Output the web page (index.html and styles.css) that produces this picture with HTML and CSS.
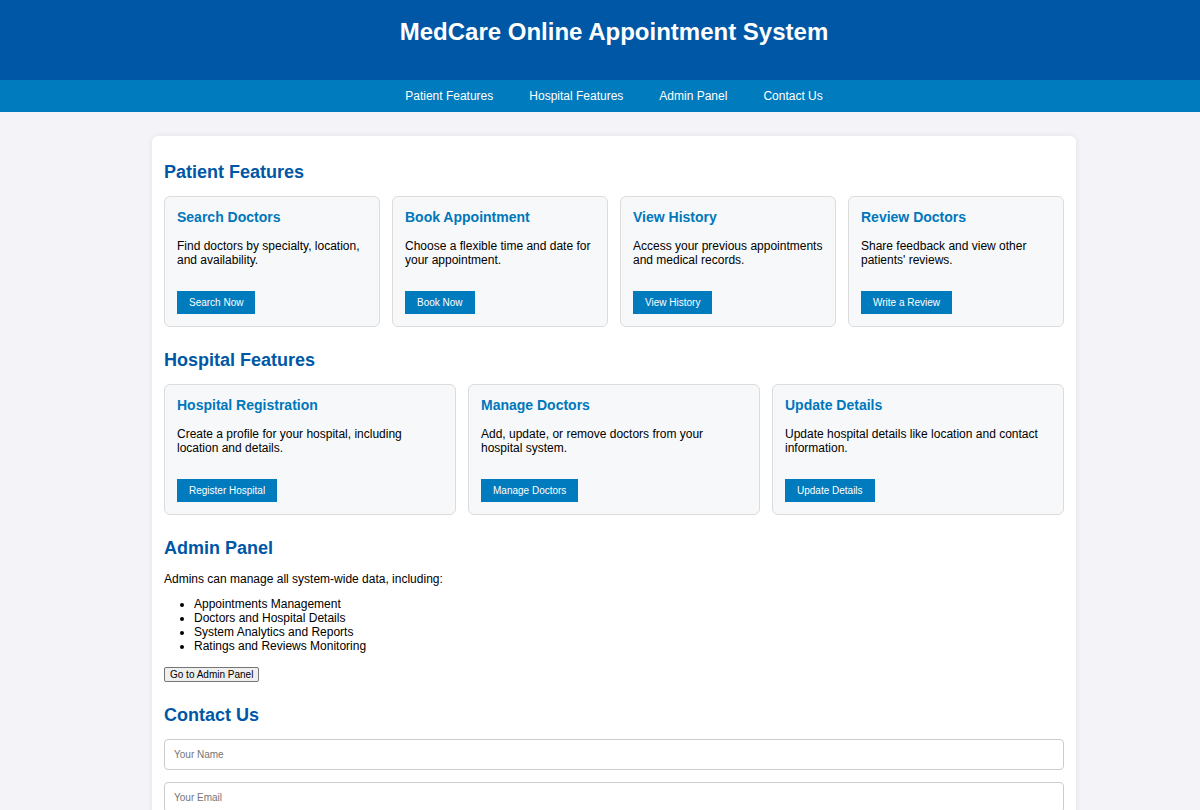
FILE: index.html
```html
<!DOCTYPE html>
<html lang="en">
<head>
<meta charset="utf-8">
<title>MedCare Online Appointment System</title>
<link rel="stylesheet" href="styles.css">
</head>
<body>
<div class="page">
<header class="site-header">
  <h1>MedCare Online Appointment System</h1>
</header>
<nav class="site-nav">
  <a href="#patient">Patient Features</a>
  <a href="#hospital">Hospital Features</a>
  <a href="#admin">Admin Panel</a>
  <a href="#contact">Contact Us</a>
</nav>
<main class="container">
  <section class="section" id="patient">
    <h2>Patient Features</h2>
    <div class="grid grid-4">
      <div class="card">
        <h3>Search Doctors</h3>
        <p>Find doctors by specialty, location, and availability.</p>
        <button class="btn">Search Now</button>
      </div>
      <div class="card">
        <h3>Book Appointment</h3>
        <p>Choose a flexible time and date for your appointment.</p>
        <button class="btn">Book Now</button>
      </div>
      <div class="card">
        <h3>View History</h3>
        <p>Access your previous appointments and medical records.</p>
        <button class="btn">View History</button>
      </div>
      <div class="card">
        <h3>Review Doctors</h3>
        <p>Share feedback and view other patients' reviews.</p>
        <button class="btn">Write a Review</button>
      </div>
    </div>
  </section>
  <section class="section" id="hospital">
    <h2>Hospital Features</h2>
    <div class="grid grid-3">
      <div class="card">
        <h3>Hospital Registration</h3>
        <p>Create a profile for your hospital, including location and details.</p>
        <button class="btn">Register Hospital</button>
      </div>
      <div class="card">
        <h3>Manage Doctors</h3>
        <p>Add, update, or remove doctors from your hospital system.</p>
        <button class="btn">Manage Doctors</button>
      </div>
      <div class="card">
        <h3>Update Details</h3>
        <p>Update hospital details like location and contact information.</p>
        <button class="btn">Update Details</button>
      </div>
    </div>
  </section>
  <section class="section" id="admin">
    <h2>Admin Panel</h2>
    <p class="text">Admins can manage all system-wide data, including:</p>
    <ul class="list">
      <li>Appointments Management</li>
      <li>Doctors and Hospital Details</li>
      <li>System Analytics and Reports</li>
      <li>Ratings and Reviews Monitoring</li>
    </ul>
    <button class="plain-btn">Go to Admin Panel</button>
  </section>
  <section class="section" id="contact">
    <h2>Contact Us</h2>
    <form class="form">
      <input class="field" type="text" placeholder="Your Name">
      <input class="field" type="email" placeholder="Your Email">
      <textarea class="field area" placeholder="Your Message"></textarea>
    </form>
  </section>
</main>
</div>
</body>
</html>
```

FILE: styles.css
```css
* { box-sizing: border-box; }

body {
  margin: 0;
  background: #f4f4f8;
  font-family: "Liberation Sans", Arial, sans-serif;
  color: #000;
}

.page {
  min-width: 1228px;
}

.site-header {
  background: #0057a6;
  height: 80px;
  padding-top: 18px;
  text-align: center;
}

.site-header h1 {
  margin: 0;
  color: #fff;
  font-size: 24px;
  line-height: 28px;
  font-weight: bold;
}

.site-nav {
  background: #007bbd;
  height: 32px;
  display: flex;
  justify-content: center;
  align-items: center;
  gap: 36px;
}

.site-nav a {
  color: #fff;
  text-decoration: none;
  font-size: 12px;
  line-height: 14px;
}

.container {
  width: 924px;
  margin: 24px auto 0;
  background: #fff;
  border-radius: 6px;
  box-shadow: 0 0 6px rgba(0, 0, 0, 0.08);
  padding: 12px 12px 40px;
}

.section {
  display: flow-root;
  padding-bottom: 9px;
}

.section h2 {
  margin: 14px 0 13px;
  color: #0057a6;
  font-size: 18px;
  line-height: 21px;
  font-weight: bold;
}

.grid {
  display: grid;
  gap: 12px;
}

.grid-4 { grid-template-columns: repeat(4, 1fr); }
.grid-3 { grid-template-columns: repeat(3, 1fr); }

.card {
  background: #f7f8fa;
  border: 1px solid #dcdcdc;
  border-radius: 6px;
  padding: 12px;
  display: flex;
  flex-direction: column;
  align-items: flex-start;
}

.card h3 {
  margin: 0 0 14px;
  color: #0077bb;
  font-size: 14px;
  line-height: 16px;
  font-weight: bold;
}

.card p {
  margin: 0 0 24px;
  font-size: 12px;
  line-height: 14px;
}

.btn {
  margin-top: auto;
  background: #007bbd;
  color: #fff;
  border: none;
  font-family: "Liberation Sans", Arial, sans-serif;
  font-size: 10px;
  line-height: 12px;
  height: 23px;
  padding: 0 12px;
  cursor: pointer;
}

.text {
  margin: 13px 0 11px;
  font-size: 12px;
  line-height: 14px;
}

.list {
  margin: 0 0 14px;
  padding-left: 30px;
  font-size: 12px;
  line-height: 14px;
}

.plain-btn {
  display: block;
  font-family: "Liberation Sans", Arial, sans-serif;
  font-size: 10px;
  line-height: 11px;
  padding: 1px 5px;
  background: #efefef;
  border: 1px solid #767676;
  border-radius: 2px;
  color: #000;
  margin: 0;
}

.form {
  display: flex;
  flex-direction: column;
  gap: 12px;
}

.field {
  width: 100%;
  height: 31px;
  border: 1px solid #cccccc;
  border-radius: 4px;
  padding: 8px 9px;
  font-family: "Liberation Sans", Arial, sans-serif;
  font-size: 10px;
  background: #fff;
}

.field::placeholder {
  color: #757575;
}

.area {
  height: 80px;
  resize: vertical;
}
```
